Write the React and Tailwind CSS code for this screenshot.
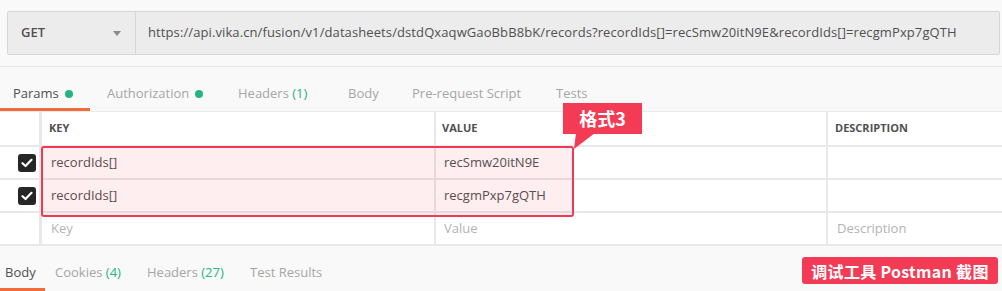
import React from "react";

const Check = () => (
  <div className="w-[18px] h-[18px] rounded-[3px] bg-[#262626] flex items-center justify-center">
    <svg width="12" height="10" viewBox="0 0 12 10">
      <path d="M1.5 5.2 L4.5 8 L10.5 1.8" fill="none" stroke="#fff" strokeWidth="2.2" strokeLinecap="round" strokeLinejoin="round" />
    </svg>
  </div>
);

const Dot = () => <span className="inline-block w-[8px] h-[8px] rounded-full bg-[#26b47f] ml-[6px] align-middle relative -top-[1px]" />;

function Row({ children, h = "h-[33px]" }) {
  return <div className={`flex ${h} border-b-2 border-[#e8e8e8] bg-white`}>{children}</div>;
}

export default function App() {
  const font = { fontFamily: "'Open Sans', 'Noto Sans CJK SC', sans-serif" };
  return (
    <div className="relative w-[1002px] h-[291px] overflow-hidden bg-[#f9f9f9] text-[13px] text-[#505050]" style={font}>
      {/* URL bar */}
      <div className="pt-[11px] pl-[7px] pr-[2px]">
        <div className="flex h-[44px] border border-[#d6d6d6] bg-[#ececec] rounded-[2px]">
          <div className="w-[128px] flex items-center justify-between pl-[13px] pr-[14px] border-r border-[#d6d6d6]">
            <span className="text-[13px] font-semibold text-[#505050]">GET</span>
            <svg width="8" height="5" viewBox="0 0 8 5"><path d="M0 0 H8 L4 5 Z" fill="#8a8a8a" /></svg>
          </div>
          <div className="flex items-center pl-[12px] text-[13px] tracking-[0.1px] text-[#505050] whitespace-nowrap">
            https://api.vika.cn/fusion/v1/datasheets/dstdQxaqwGaoBbB8bK/records?recordIds[]=recSmw20itN9E&amp;recordIds[]=recgmPxp7gQTH
          </div>
        </div>
      </div>

      <div className="mt-[11px] h-px bg-[#e6e6e6]" />

      {/* Request tabs */}
      <div className="flex flex-col">
        <div className="flex pl-[13px] mt-[17px] h-[20px] items-center text-[13px] text-[#a6a6a6] whitespace-nowrap">
          <div className="w-[94px] text-[#505050]">Params<Dot /></div>
          <div className="w-[131px]">Authorization<Dot /></div>
          <div className="w-[110px]">Headers <span className="text-[#26b47f]">(1)</span></div>
          <div className="w-[64px]">Body</div>
          <div className="w-[144px]">Pre-request Script</div>
          <div>Tests</div>
        </div>
        <div className="mt-[4px] w-[90px] h-[3px] bg-[#f26b3a]" />
      </div>

      {/* Table */}
      <div className="relative border-t border-[#ececec]">
        <Row h="h-[35px]">
          <div className="w-[42px] border-r-[3px] border-[#e8e8e8]" />
          <div className="w-[394px] border-r-2 border-[#e8e8e8] pl-[7px] flex items-center text-[11px] font-bold">KEY</div>
          <div className="w-[392px] border-r-2 border-[#e8e8e8] pl-[6px] flex items-center text-[11px] font-bold">VALUE</div>
          <div className="flex-1 pl-[7px] flex items-center text-[11px] font-bold">DESCRIPTION</div>
        </Row>
        {[["recordIds[]", "recSmw20itN9E"], ["recordIds[]", "recgmPxp7gQTH"]].map(([k, v], i) => (
          <Row key={i}>
            <div className="w-[42px] border-r-[3px] border-[#e8e8e8] pl-[18px] flex items-center"><Check /></div>
            <div className="w-[394px] border-r-2 border-[#e8e8e8] pl-[9px] flex items-center">{k}</div>
            <div className="w-[392px] border-r-2 border-[#e8e8e8] pl-[8px] flex items-center">{v}</div>
            <div className="flex-1" />
          </Row>
        ))}
        <Row>
          <div className="w-[42px] border-r-[3px] border-[#e8e8e8]" />
          <div className="w-[394px] border-r-2 border-[#e8e8e8] pl-[9px] flex items-center text-[#b3b3b3]">Key</div>
          <div className="w-[392px] border-r-2 border-[#e8e8e8] pl-[8px] flex items-center text-[#b3b3b3]">Value</div>
          <div className="flex-1 pl-[9px] flex items-center text-[#b3b3b3]">Description</div>
        </Row>
        {/* highlight annotation */}
        <div className="absolute left-[41px] top-[34px] w-[533px] h-[71px] border-2 border-[#ee3a55] rounded-[3px] bg-[rgba(240,40,70,0.08)]" />
      </div>

      {/* Response tabs */}
      <div className="flex flex-col">
        <div className="flex pl-[5px] mt-[17px] h-[20px] items-center text-[13px] text-[#a6a6a6] whitespace-nowrap">
          <div className="w-[50px] text-[#505050]">Body</div>
          <div className="w-[92px]">Cookies <span className="text-[#26b47f]">(4)</span></div>
          <div className="w-[103px]">Headers <span className="text-[#26b47f]">(27)</span></div>
          <div>Test Results</div>
        </div>
        <div className="mt-[5px] w-[45px] h-[3px] bg-[#f26b3a]" />
      </div>

      {/* callout */}
      <div className="absolute left-[563px] top-[103px] w-[79px] h-[31px] bg-[#f43b56] flex items-center justify-center text-white text-[18px] font-bold" style={{ fontFamily: "'Noto Sans CJK SC', 'Open Sans', sans-serif" }}>
        格式3
      </div>
      <svg className="absolute left-[572px] top-[133px]" width="26" height="17" viewBox="0 0 26 17">
        <polygon points="4,0 23,0 2,16" fill="#f43b56" />
      </svg>

      {/* bottom label */}
      <div className="absolute left-[802px] top-[257px] w-[196px] h-[27px] rounded-[3px] bg-[#f43b56] flex items-center justify-center text-white text-[16px] font-bold tracking-[0.3px] whitespace-nowrap" style={{ fontFamily: "'Noto Sans CJK SC', 'Open Sans', sans-serif" }}>
        调试工具 Postman 截图
      </div>
    </div>
  );
}
